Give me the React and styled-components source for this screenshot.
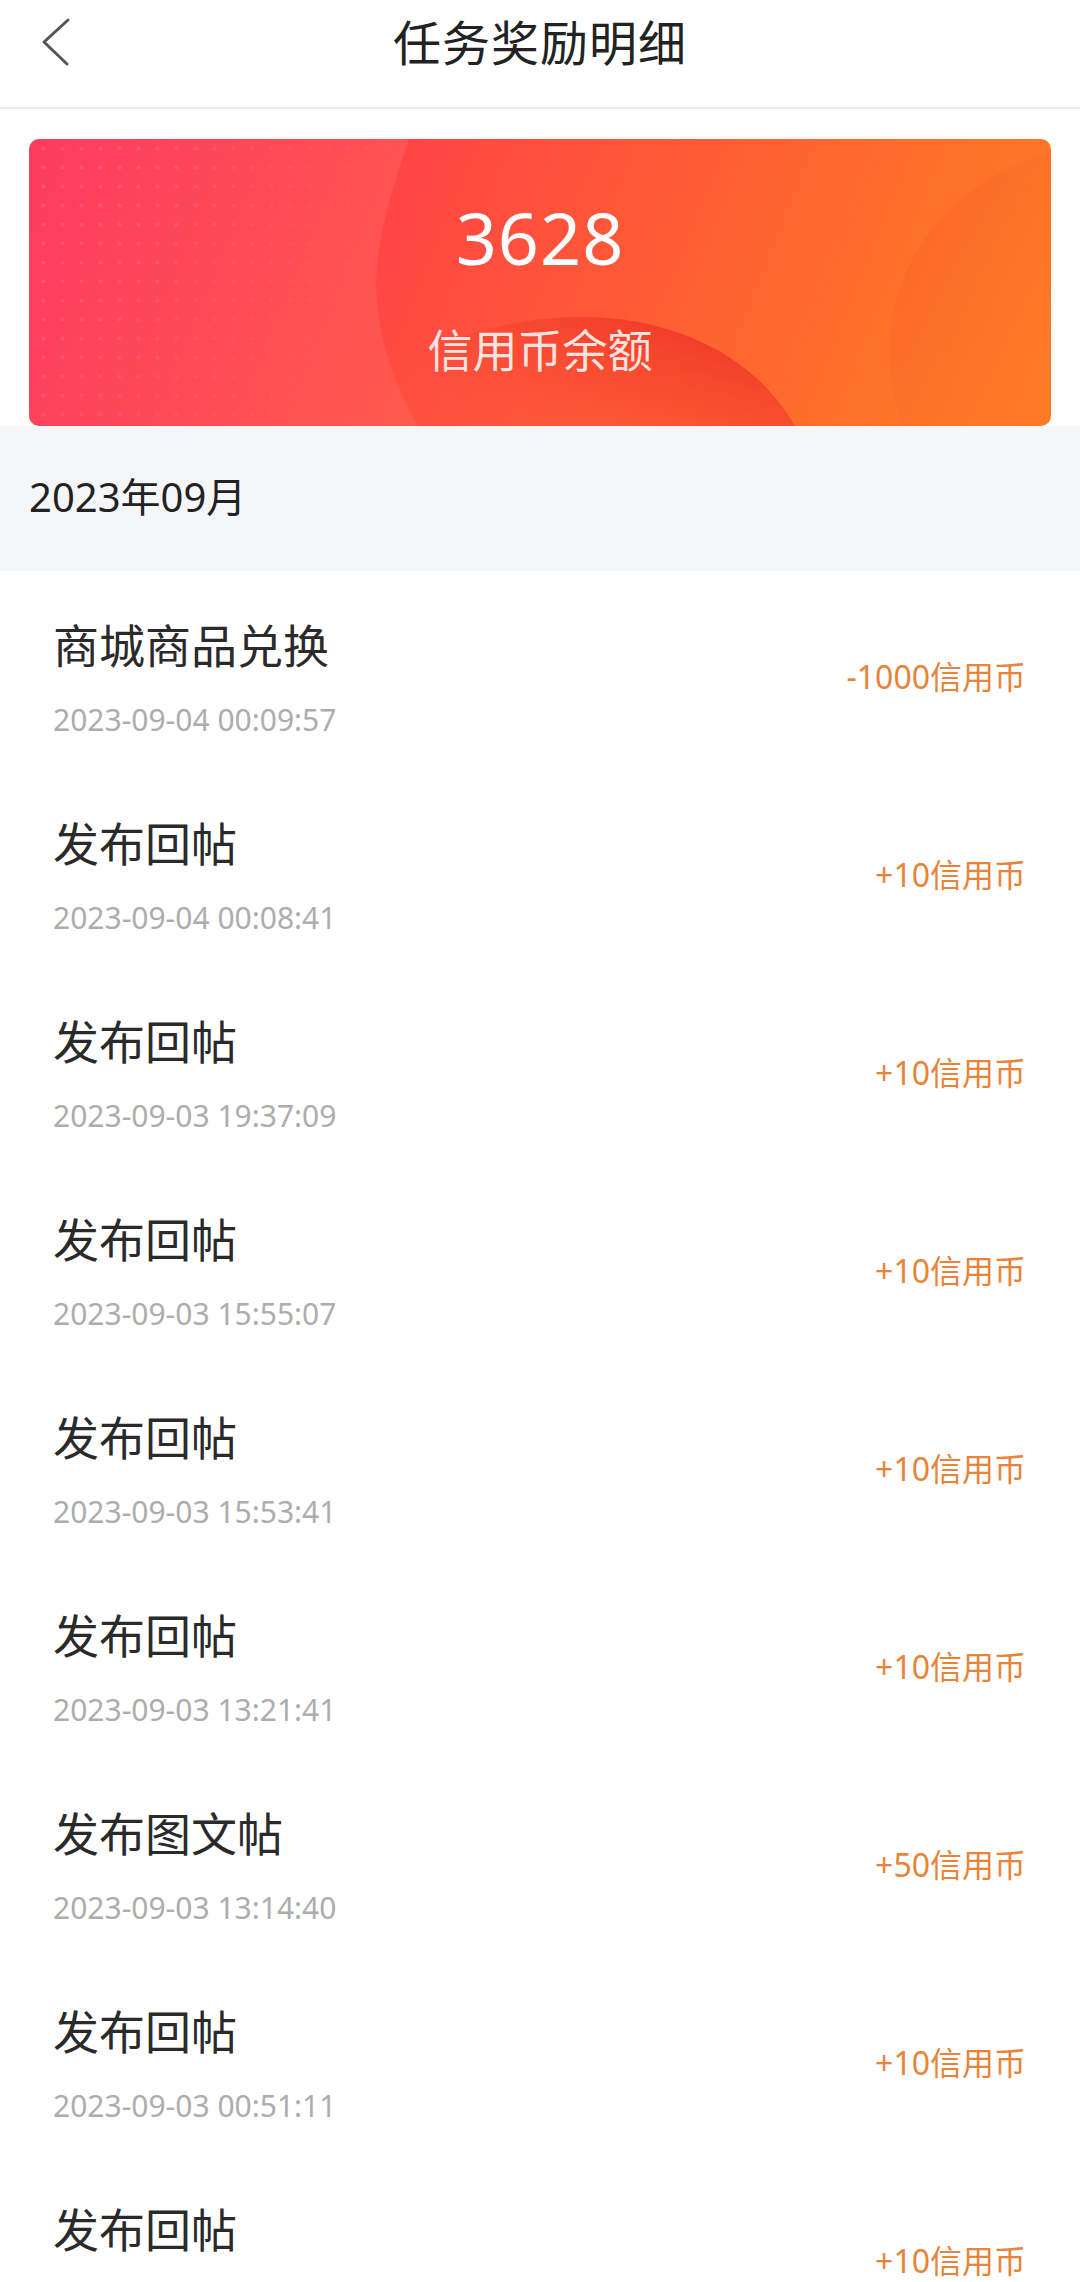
import React from "react";
import styled, { createGlobalStyle } from "styled-components";

const GlobalStyle = createGlobalStyle`
  html, body {
    margin: 0;
    padding: 0;
    background: #ffffff;
  }

  body {
    font-family: "Noto Sans", "Noto Sans CJK SC", sans-serif;
    -webkit-font-smoothing: antialiased;
  }
`;

const Page = styled.div`
  width: 1080px;
  background: #ffffff;
`;

const Header = styled.header`
  display: grid;
  grid-template-columns: 1fr auto 1fr;
  align-items: start;
  height: 107px;
  border-bottom: 2px solid #ececec;
`;

const BackButton = styled.button`
  display: flex;
  align-items: center;
  width: 100px;
  height: 84px;
  padding: 0 0 0 40px;
  border: none;
  background: none;
`;

const Title = styled.h1`
  margin: 0;
  font-size: 48px;
  font-weight: 400;
  line-height: 86px;
  color: #222222;
  letter-spacing: 1px;
`;

const CardWrap = styled.div`
  padding: 30px 29px 0;
`;

const Card = styled.div`
  position: relative;
  overflow: hidden;
  height: 287px;
  border-radius: 10px;
  background: linear-gradient(
    112deg,
    #fd2d55 0%,
    #ff4247 30%,
    #ff5a36 58%,
    #ff7129 82%,
    #ff7c26 100%
  );
  display: flex;
  flex-direction: column;
  align-items: center;
  color: #ffffff;
`;

const Decor = styled.svg`
  position: absolute;
  inset: 0;
  width: 100%;
  height: 100%;
`;

const Balance = styled.div`
  position: relative;
  margin-top: 50px;
  font-size: 72px;
  line-height: 96px;
  font-weight: 400;
  letter-spacing: 1px;
`;

const BalanceLabel = styled.div`
  position: relative;
  margin-top: 36px;
  font-size: 45px;
  line-height: 60px;
  color: rgba(255, 255, 255, 0.86);
`;

const MonthBar = styled.div`
  display: flex;
  align-items: center;
  height: 145px;
  box-sizing: border-box;
  padding: 0 0 8px 29px;
  background: #f5f6f8;
  font-size: 40px;
  color: #222222;
`;

const Row = styled.div`
  display: flex;
  align-items: flex-start;
  justify-content: space-between;
  height: 198px;
  padding: 46px 54px 0 53px;
  box-sizing: border-box;
`;

const RowMain = styled.div`
  display: flex;
  flex-direction: column;
`;

const RowTitle = styled.div`
  font-size: 46px;
  line-height: 56px;
  color: #2a2a2a;
`;

const RowDate = styled.div`
  margin-top: 27px;
  font-size: 30px;
  line-height: 40px;
  color: #adadad;
`;

const Amount = styled.div`
  margin-top: 39px;
  font-size: 32px;
  line-height: 42px;
  color: #e8833a;
`;

const records = [
  { title: "商城商品兑换", date: "2023-09-04 00:09:57", amount: "-1000信用币" },
  { title: "发布回帖", date: "2023-09-04 00:08:41", amount: "+10信用币" },
  { title: "发布回帖", date: "2023-09-03 19:37:09", amount: "+10信用币" },
  { title: "发布回帖", date: "2023-09-03 15:55:07", amount: "+10信用币" },
  { title: "发布回帖", date: "2023-09-03 15:53:41", amount: "+10信用币" },
  { title: "发布回帖", date: "2023-09-03 13:21:41", amount: "+10信用币" },
  { title: "发布图文帖", date: "2023-09-03 13:14:40", amount: "+50信用币" },
  { title: "发布回帖", date: "2023-09-03 00:51:11", amount: "+10信用币" },
  { title: "发布回帖", date: null, amount: "+10信用币" },
];

function CardDecor() {
  return (
    <Decor viewBox="0 0 1022 287" preserveAspectRatio="none">
      <defs>
        <pattern id="dots" width="19" height="19" patternUnits="userSpaceOnUse" x="5" y="19">
          <circle cx="9.5" cy="9.5" r="2.1" fill="#ffffff" />
        </pattern>
        <linearGradient id="dotFade" x1="0" y1="0" x2="1" y2="0.3">
          <stop offset="0" stopColor="#fff" stopOpacity="0.9" />
          <stop offset="0.55" stopColor="#fff" stopOpacity="0.35" />
          <stop offset="1" stopColor="#fff" stopOpacity="0" />
        </linearGradient>
        <mask id="dotMask">
          <rect x="0" y="0" width="420" height="287" fill="url(#dotFade)" />
        </mask>
        <linearGradient id="redBlob" x1="1" y1="0.2" x2="0" y2="0.8">
          <stop offset="0" stopColor="#ec3226" stopOpacity="1" />
          <stop offset="0.45" stopColor="#f5442f" stopOpacity="0.6" />
          <stop offset="1" stopColor="#ff5d4a" stopOpacity="0" />
        </linearGradient>
        <linearGradient id="rightBlob" x1="0" y1="0" x2="1" y2="1">
          <stop offset="0" stopColor="#f4512a" stopOpacity="0.35" />
          <stop offset="1" stopColor="#ff7a24" stopOpacity="0.15" />
        </linearGradient>
      </defs>
      <path
        d="M0 0 L380 0 C360 60 340 120 350 180 C358 230 375 260 389 287 L0 287 Z"
        fill="#ffffff"
        opacity="0.07"
      />
      <path
        d="M300 287 C350 225 440 182 540 178 C640 175 725 215 766 287 Z"
        fill="url(#redBlob)"
      />
      <path
        d="M1022 12 C930 40 870 110 862 190 C858 230 866 265 874 287 L1022 287 Z"
        fill="url(#rightBlob)"
      />
      <rect x="0" y="0" width="420" height="287" fill="url(#dots)" opacity="0.16" mask="url(#dotMask)" />
    </Decor>
  );
}

function BackIcon() {
  return (
    <svg width="40" height="60" viewBox="0 0 40 60">
      <polyline
        points="28,8 4,30 27,52"
        fill="none"
        stroke="#555555"
        strokeWidth="3"
        strokeLinecap="round"
        strokeLinejoin="round"
      />
    </svg>
  );
}

export default function App() {
  return (
    <Page>
      <GlobalStyle />
      <Header>
        <BackButton aria-label="back">
          <BackIcon />
        </BackButton>
        <Title>任务奖励明细</Title>
        <div />
      </Header>
      <CardWrap>
        <Card>
          <CardDecor />
          <Balance>3628</Balance>
          <BalanceLabel>信用币余额</BalanceLabel>
        </Card>
      </CardWrap>
      <MonthBar>2023年09月</MonthBar>
      {records.map((r, i) => (
        <Row key={i}>
          <RowMain>
            <RowTitle>{r.title}</RowTitle>
            {r.date && <RowDate>{r.date}</RowDate>}
          </RowMain>
          <Amount>{r.amount}</Amount>
        </Row>
      ))}
    </Page>
  );
}
